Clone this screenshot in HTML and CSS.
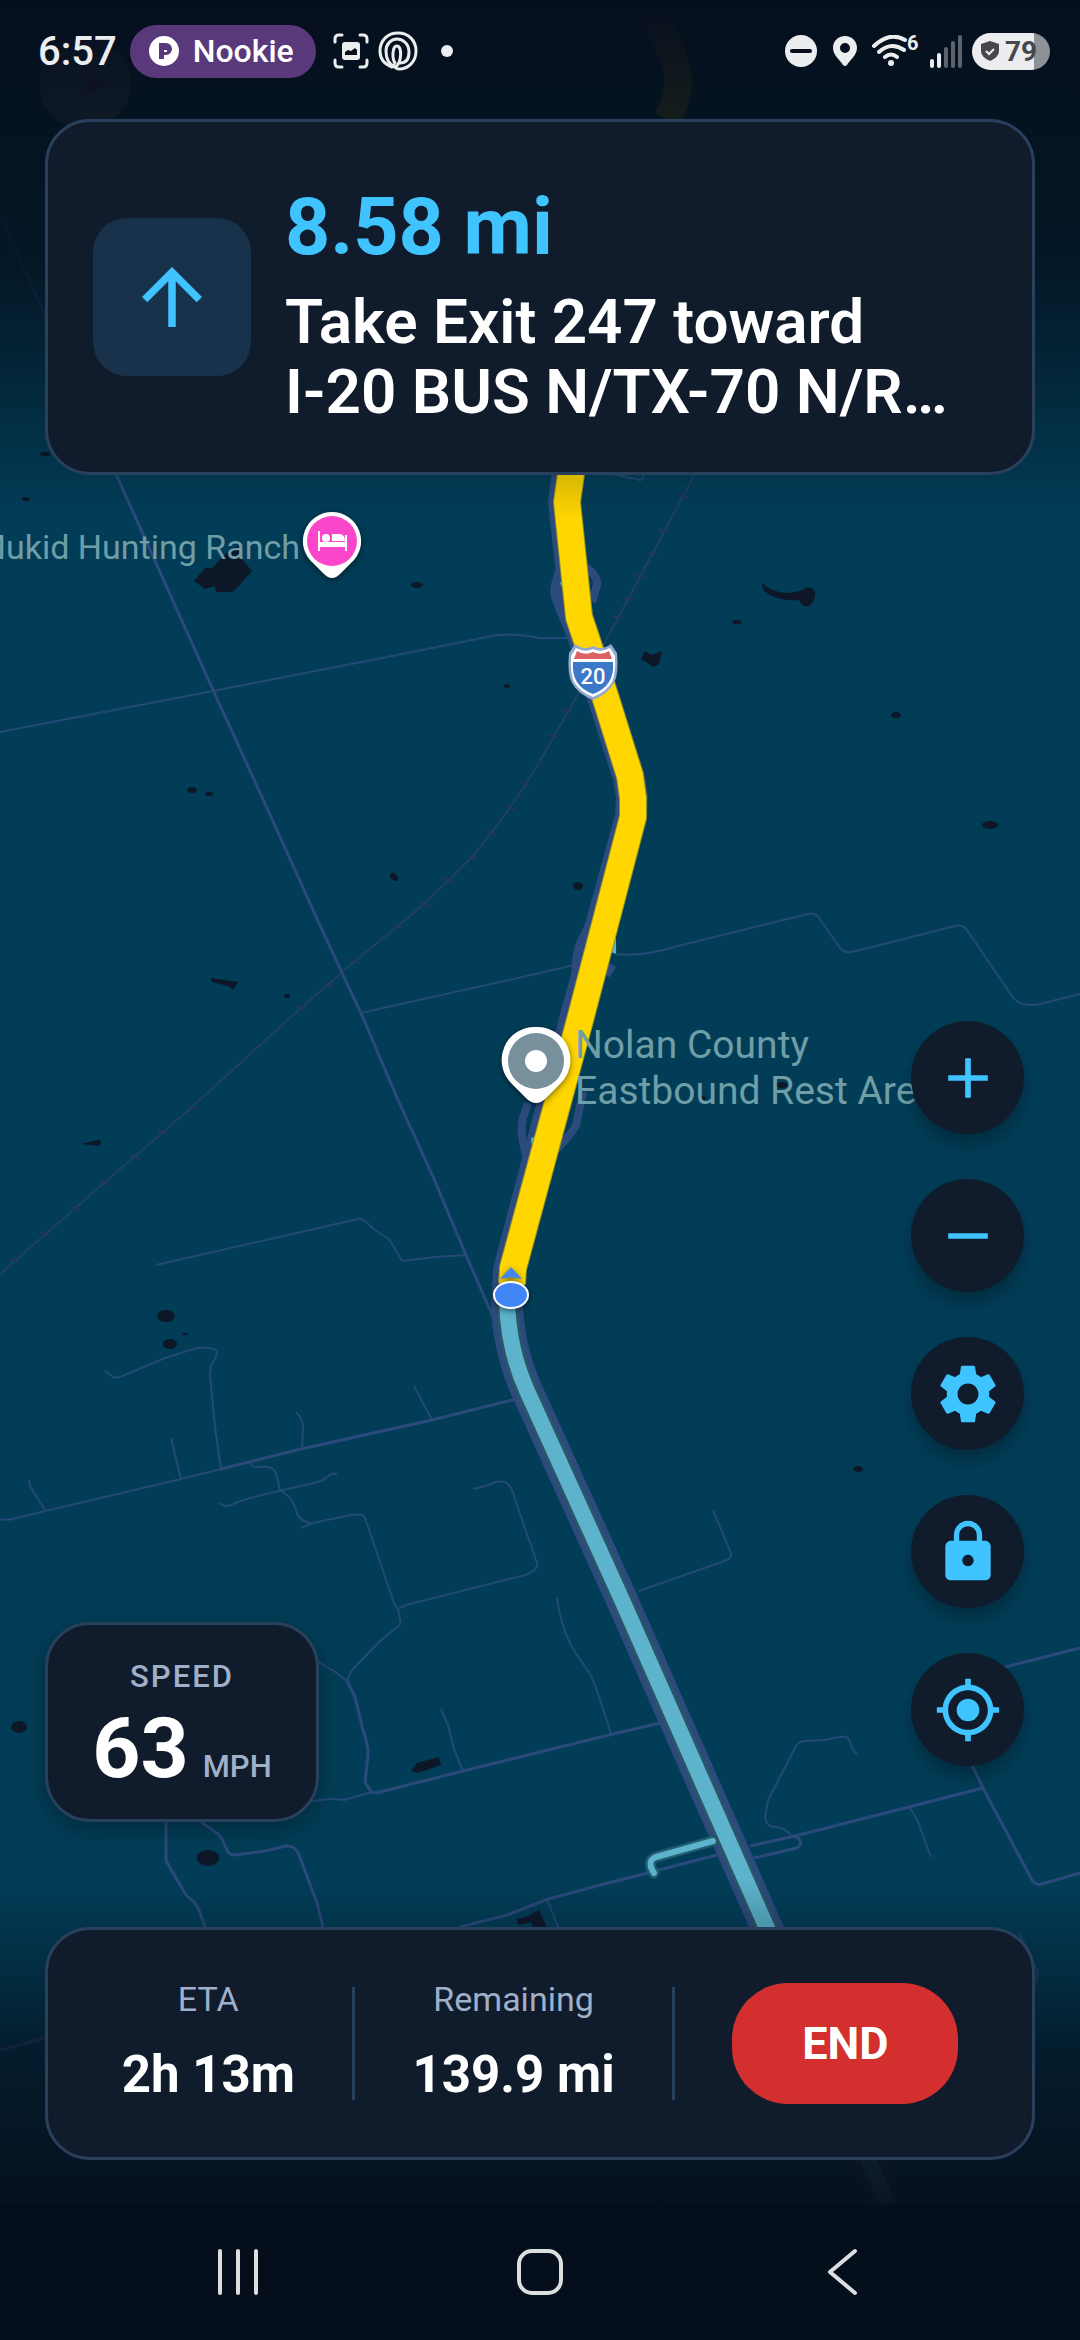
FILE: index.html
```html
<!DOCTYPE html>
<html lang="en">
<head>
    <meta charset="UTF-8">
    <meta name="viewport" content="width=device-width, initial-scale=1.0">
    <title>Navigation</title>
    <link rel="stylesheet" href="styles.css">
</head>
<body>
    <div class="screen">
        <!-- Map -->
        <svg class="map" viewBox="0 0 1080 2340" preserveAspectRatio="xMidYMin slice">
            <!-- Water -->
            <g class="water">
                <path d="M194 581L205 568L212 568L224 555L239 545L241 558L252 571L236 589L232 592L216 592L215 586L205 589Z"/>
                <path d="M211 978L238 982L233 990L228 986L212 982Z"/>
                <path d="M761 582Q772 593 790 593L803 590Q806 586 812 588Q817 592 814 599Q811 608 804 606Q800 603 799 600Q778 602 764 591Z"/>
                <path d="M641 659L645 651L652 655L662 651L659 664L654 667Z"/>
                <path d="M81 1144L93 1141L101 1140L100 1146Z"/>
                <path d="M411 1771L417 1763L439 1757L441 1765L418 1773Z"/>
                <path d="M516 1919L526 1917L539 1910L547 1928L533 1928L531 1922L519 1925Z"/>
                <path d="M650 2192L656 2192L668 2205L656 2205Z"/>
                <ellipse cx="26" cy="499" rx="4" ry="2"/>
                <ellipse cx="45" cy="454" rx="5" ry="2"/>
                <ellipse cx="417" cy="585" rx="6" ry="3"/>
                <ellipse cx="507" cy="686" rx="3" ry="2"/>
                <ellipse cx="192" cy="790" rx="5" ry="3"/>
                <ellipse cx="209" cy="794" rx="4" ry="2"/>
                <ellipse cx="394" cy="877" rx="5" ry="3" transform="rotate(40 394 877)"/>
                <ellipse cx="287" cy="996" rx="3" ry="2"/>
                <ellipse cx="737" cy="622" rx="5" ry="2"/>
                <ellipse cx="896" cy="715" rx="5" ry="3"/>
                <ellipse cx="990" cy="825" rx="8" ry="4"/>
                <ellipse cx="578" cy="886" rx="5" ry="4"/>
                <ellipse cx="782" cy="1085" rx="6" ry="3"/>
                <ellipse cx="702" cy="1098" rx="4" ry="2"/>
                <ellipse cx="166" cy="1316" rx="9" ry="6"/>
                <ellipse cx="185" cy="1334" rx="3" ry="1"/>
                <ellipse cx="170" cy="1344" rx="7" ry="5"/>
                <ellipse cx="858" cy="1469" rx="5" ry="3"/>
                <ellipse cx="19" cy="1727" rx="8" ry="6"/>
                <ellipse cx="208" cy="1858" rx="11" ry="8"/>
            </g>

            <!-- Railway -->
            <path class="rail" d="M695 474L604 644L578 694L540 761C520 796 500 823 472 857C440 890 420 908 398 926L355 961L301 1008L192 1107L104 1183L0 1274"/>
            <path class="ties" d="M678 495l10 2M659 530l10 2M648 553l10 2M635 575l10 2M623 598l10 2M612 616l10 2M562 710l10 2M548 735l10 2M520 782l10 4M505 806l10 4M486 831l10 4M467 855l10 4M443 878l10 4M419 902l10 4M393 924l10 4M350 959l10 4M323 983l10 4M296 1006l10 4M187 1105l10 4M158 1130l10 4M129 1155l10 4M99 1181l10 4M70 1206l10 4M40 1232l10 4M10 1259l10 4"/>

            <!-- Local roads -->
            <g class="road road-thin">
                <path d="M0 732L213 691L372 660L492 636Q510 632 540 638L569 638"/>
                <path d="M361 1013L540 973L574 965M616 954Q643 957 678 946L808 914Q815 912 819 918L833 938L841 949Q845 953 852 952L955 926Q963 924 967 930L1012 996Q1020 1008 1040 1004L1080 994"/>
                <path d="M612 474L640 480Q644 480 643 474"/>
                <path d="M156 1265L358 1219Q363 1218 366 1222L375 1230L389 1239L401 1259Q403 1262 410 1260L436 1257L466 1255"/>
                <path d="M105 1371L113 1377Q116 1379 127 1374L165 1358L190 1350Q205 1345 216 1350Q219 1354 211 1365L210 1375L215 1427L221 1469"/>
                <path d="M0 1519Q8 1521 16 1518L181 1479L221 1469"/>
                <path d="M414 1386L432 1420M296 1412Q304 1420 303 1430L302 1449M171 1438L181 1479M29 1480L30 1486L45 1510"/>
                <path d="M250 1463Q252 1468 260 1467Q273 1466 275 1472Q279 1481 279 1487Q280 1491 287 1495Q294 1502 296 1510Q298 1522 313 1523"/>
                <path d="M220 1503Q226 1509 235 1503Q250 1497 288 1489L318 1482Q324 1480 327 1477Q332 1472 337 1474"/>
                <path d="M301 1528L313 1523L351 1515Q363 1513 365 1518L394 1603L398 1609L399 1616Q403 1624 396 1628L380 1641L351 1671L347 1681"/>
                <path d="M473 1489L489 1485Q498 1480 505 1482Q510 1484 513 1493L537 1563Q539 1570 525 1575L406 1605L398 1609"/>
                <path d="M318 1662L334 1671L347 1681M312 1801L331 1799L344 1800L372 1792M441 1709L448 1725L454 1749L463 1771"/>
                <path d="M557 1598Q562 1632 575 1652L590 1674Q595 1682 611 1734"/>
                <path d="M639 1591L727 1560Q733 1557 730 1551L713 1510"/>
                <path d="M857 1755Q852 1750 850 1742Q848 1735 840 1737L824 1740L805 1741Q797 1741 794 1750L768 1800L765 1818Q767 1827 775 1827Q784 1827 792 1836"/>
                <path d="M909 1807Q916 1817 918 1822L931 1857M547 1899L558 1927M1019 1933L1038 1972L1036 1982"/>
            </g>
            <g class="road">
                <path d="M0 215L116 474L213 690L262 797L318 921L364 1020L398 1100L434 1179L466 1255L494 1319"/>
                <path d="M221 1469L301 1449L432 1420L516 1399"/>
                <path d="M347 1681L355 1697L363 1730Q369 1747 368 1755L365 1783L371 1791Q373 1794 380 1792L463 1771L609 1735L660 1723"/>
                <path d="M166 1822V1861L186 1895L195 1903Q199 1908 205 1927"/>
                <path d="M201 1822L218 1834Q222 1838 225 1846Q229 1856 234 1855L265 1851L286 1846Q295 1845 299 1855L317 1903L323 1927"/>
                <path d="M750 1846L795 1836L909 1807L971 1791L983 1788M960 1740L983 1788L1032 1880Q1036 1886 1042 1884L1080 1873M970 1678L1005 1667L1080 1648"/>
                <path d="M795 1836Q805 1842 797 1848L754 1858M717 1855L593 1887L548 1899L507 1915L460 1927M0 2050L45 2038"/>
            </g>

            <!-- Highway casing and ramps -->
            <g class="highway">
                <path d="M572 440L568 474L564 502L577 617L586 644L603 696L629 778L632 798L631 817L575 1020L509 1270L507 1303Q508 1350 528 1393L622 1600L766 1926L888 2205"/>
            </g>
            <g class="ramp">
                <path d="M562 560L557 578Q552 592 556 600L570 635M584 566Q598 575 597 585L592 602M594 915L580 943Q574 960 576 985L568 1020M528 1103L523 1118Q519 1130 526 1155M583 1092L576 1125Q573 1132 556 1150M613 965L606 975"/>
            </g>
            <path class="teal-fill" d="M560 583L565 577L568 600ZM611 952L616 935V954ZM531 1138L537 1136L533 1156Z"/>
            <path class="ramp-casing" d="M713 1841L656 1857Q646 1861 654 1873"/>
            <path class="ramp-teal" d="M713 1841L656 1857Q646 1861 654 1873"/>
            <path class="driven-casing" d="M507 1300Q508 1350 528 1393L622 1600L766 1926L888 2205"/>
            <path class="driven" d="M507 1300Q508 1350 528 1393L622 1600L766 1926L888 2205"/>

            <!-- Route ahead -->
            <path class="route-edge" d="M655 15L670 50Q688 82 667 119M576 440L571 474L567 502L579 617L588 644L605 696L630 776L633 798L633 817L580 1020L513 1268L512 1284"/>
            <path class="route" d="M655 15L670 50Q688 82 667 119M576 440L571 474L567 502L579 617L588 644L605 696L630 776L633 798L633 817L580 1020L513 1268L512 1284"/>

            <!-- Compass -->
            <circle cx="85" cy="83" r="46" fill="#9a9a9c"/>
            <path d="M113 83L84 76L89 83L85 92Z" fill="#b02a35"/>

            <!-- Interstate shield -->
            <g>
                <path d="M575 644Q584 651 593 646Q602 651 611 644L617 653Q619 674 614 683Q608 694 593 700Q578 694 572 683Q567 674 569 653Z" fill="#92a9cf"/>
                <path d="M576 648Q585 653 593 649Q601 653 610 648L615 656Q616 673 612 682Q606 692 593 697Q580 692 574 682Q570 673 571 656Z" fill="#fff"/>
                <path d="M577 651Q585 656 593 652Q601 656 609 651L612 659H574Z" fill="#dd6262"/>
                <path d="M573 662H613Q614 674 609 682Q604 690 593 694Q582 690 577 682Q572 674 573 662Z" fill="#3b78c8"/>
                <text class="shield-text" x="593" y="684">20</text>
            </g>

            <!-- Lodging -->
            <text class="poi poi-end" x="300" y="559">Mukid Hunting Ranch</text>
            <g class="pin">
                <path d="M332 512A29 29 0 0 0 313 563L324 574Q332 582 340 574L351 563A29 29 0 0 0 332 512Z" fill="#fff"/>
                <circle cx="332" cy="541" r="25" fill="#f946cb"/>
                <path d="M318 531h2v11h25v-7h2v16h-2v-4h-25v4h-2zM332 534h8q5 1 5 7h-13z" fill="#fff"/>
                <circle cx="326" cy="538" r="4" fill="#fff"/>
            </g>

            <!-- Rest area -->
            <text class="poi poi-large" x="575" y="1058">Nolan County</text>
            <text class="poi poi-large" x="575" y="1104">Eastbound Rest Area</text>
            <g class="pin">
                <path d="M536 1027A33 33 0 0 0 512 1084L527 1099Q536 1107 545 1099L560 1084A33 33 0 0 0 536 1027Z" fill="#fff"/>
                <circle cx="536" cy="1061" r="28" fill="#78909c"/>
                <circle cx="536" cy="1061" r="11" fill="#fff"/>
            </g>

            <!-- Own position -->
            <g class="pin">
                <path d="M511 1267L522 1279Q511 1276 500 1279Z" fill="#4285f4"/>
                <ellipse cx="511" cy="1295" rx="18" ry="14" fill="#fff"/>
                <ellipse cx="511" cy="1295" rx="16" ry="12" fill="#4285f4"/>
            </g>
        </svg>
        <div class="shade shade-top"></div>
        <div class="shade shade-bottom"></div>

        <header class="status-bar">
            <div class="status-left">
                <span class="clock">6:57</span>
                <span class="media-pill">
                    <svg width="30" height="30" viewBox="0 0 30 30">
                        <circle cx="15" cy="15" r="15" fill="#fff"/>
                        <path d="M10 7h7a6 6 0 0 1 0 12h-2v4h-5z" fill="#59387c"/>
                        <path d="M15 15h3" stroke="#fff" stroke-width="2"/>
                    </svg>
                    Nookie
                </span>
                <svg width="36" height="36" viewBox="0 0 36 36" fill="none" stroke="#ecedef" stroke-width="3" stroke-linecap="round">
                    <path d="M2 9V6q0-4 4-4h3M27 2h3q4 0 4 4v3M34 27v3q0 4-4 4h-3M9 34H6q-4 0-4-4v-3"/>
                    <rect x="9" y="9" width="18" height="18" rx="3" fill="#ecedef" stroke="none"/>
                    <path d="M12 22v-3l3-2 3 1 4-3 2 2v5z" fill="#06101c" stroke="none"/>
                </svg>
                <svg width="40" height="40" viewBox="0 0 40 40" fill="none" stroke="#ecedef" stroke-width="3" stroke-linecap="round">
                    <path d="M14 36C6 33 2 27 2 20C2 9 10 2 20 2S38 9 38 20S30 38 21 38Q17 38 16 34"/>
                    <path d="M17 36C10 33 8 27 8 20C8 13 13 8 19 8S31 13 31 21S27 32 22 32"/>
                    <path d="M17 32C14 28 14 15 19 15S24 30 18 36"/>
                </svg>
                <span class="more-dot"></span>
            </div>
            <div class="status-right">
                <svg width="32" height="32" viewBox="0 0 32 32">
                    <circle cx="16" cy="16" r="16" fill="#ecedef"/>
                    <path d="M7 16h18" stroke="#06101c" stroke-width="4" stroke-linecap="round"/>
                </svg>
                <svg class="location" width="24" height="30" viewBox="0 0 24 30">
                    <path d="M12 0C5 0 0 5 0 12c0 7 7 12 10 17q2 2 4 0c3-5 10-10 10-17C24 5 19 0 12 0zm0 7a5 5 0 1 1 0 10 5 5 0 0 1 0-10z" fill="#ecedef"/>
                </svg>
                <svg width="36" height="32" viewBox="0 0 36 32" fill="none" stroke="#ecedef" stroke-width="4" stroke-linecap="round">
                    <path d="M3 11Q19-4 34 5M8 17Q20 6 33 15M14 22Q20 17 26 22"/>
                    <circle cx="20" cy="28" r="3" fill="#ecedef" stroke="none"/>
                </svg>
                <span class="wifi-gen">6</span>
                <svg width="34" height="34" viewBox="0 0 34 34" stroke-width="4" stroke-linecap="round">
                    <path d="M3 27v5M10 21v11" stroke="#ecedef"/>
                    <path d="M17 15v17M24 9v23M31 3v29" stroke="#5d636d"/>
                </svg>
                <span class="battery">
                    <svg width="18" height="20" viewBox="0 0 18 20">
                        <path d="M9 0L18 3V10Q18 16 9 20Q0 16 0 10V3Z" fill="#47484d"/>
                        <path d="M5 10l3 3 5-5" fill="none" stroke="#ecedef" stroke-width="2"/>
                    </svg>
                    79
                </span>
            </div>
        </header>

        <section class="card direction">
            <div class="maneuver">
                <svg width="90" height="90" viewBox="0 0 24 24" fill="#40c4ff">
                    <path d="M4 12l1.41 1.41L11 7.83V20h2V7.83l5.58 5.59L20 12l-8-8-8 8z"/>
                </svg>
            </div>
            <div class="direction-text">
                <div class="distance">8.58 mi</div>
                <h1>Take Exit 247 toward<br>I-20 BUS N/TX-70 N/R…</h1>
            </div>
        </section>

        <main class="middle">
            <section class="card speed">
                <div class="speed-label">SPEED</div>
                <div class="speed-row">
                    <span class="speed-value">63</span>
                    <span class="speed-unit">MPH</span>
                </div>
            </section>
            <div class="controls">
                <button type="button" class="fab" aria-label="Zoom in">
                    <svg width="68" height="68" viewBox="0 0 24 24"><path d="M19 13h-6v6h-2v-6H5v-2h6V5h2v6h6v2z"/></svg>
                </button>
                <button type="button" class="fab" aria-label="Zoom out">
                    <svg width="68" height="68" viewBox="0 0 24 24"><path d="M19 13H5v-2h14v2z"/></svg>
                </button>
                <button type="button" class="fab" aria-label="Settings">
                    <svg width="68" height="68" viewBox="0 0 24 24"><path d="M19.43 12.98c.04-.32.07-.64.07-.98s-.03-.66-.07-.98l2.11-1.65c.19-.15.24-.42.12-.64l-2-3.46c-.12-.22-.39-.3-.61-.22l-2.49 1c-.52-.4-1.08-.73-1.69-.98l-.38-2.65C14.46 2.18 14.25 2 14 2h-4c-.25 0-.46.18-.49.42l-.38 2.65c-.61.25-1.17.59-1.69.98l-2.49-1c-.23-.09-.49 0-.61.22l-2 3.46c-.13.22-.07.49.12.64l2.11 1.65c-.04.32-.07.65-.07.98s.03.66.07.98l-2.11 1.65c-.19.15-.24.42-.12.64l2 3.46c.12.22.39.3.61.22l2.49-1c.52.4 1.08.73 1.69.98l.38 2.65c.03.24.24.42.49.42h4c.25 0 .46-.18.49-.42l.38-2.65c.61-.25 1.17-.59 1.69-.98l2.49 1c.23.09.49 0 .61-.22l2-3.46c.12-.22.07-.49-.12-.64l-2.11-1.65zM12 15.7c-2.04 0-3.7-1.66-3.7-3.7s1.66-3.7 3.7-3.7 3.7 1.66 3.7 3.7-1.66 3.7-3.7 3.7z"/></svg>
                </button>
                <button type="button" class="fab" aria-label="Lock">
                    <svg width="68" height="68" viewBox="0 0 24 24"><path d="M18 8h-1V6c0-2.76-2.24-5-5-5S7 3.24 7 6v2H6c-1.1 0-2 .9-2 2v10c0 1.1.9 2 2 2h12c1.1 0 2-.9 2-2V10c0-1.1-.9-2-2-2zm-6 9c-1.1 0-2-.9-2-2s.9-2 2-2 2 .9 2 2-.9 2-2 2zm3.1-9H8.9V6c0-1.71 1.39-3.1 3.1-3.1 1.71 0 3.1 1.39 3.1 3.1v2z"/></svg>
                </button>
                <button type="button" class="fab" aria-label="My location">
                    <svg width="68" height="68" viewBox="0 0 24 24"><path d="M12 8c-2.21 0-4 1.79-4 4s1.79 4 4 4 4-1.79 4-4-1.79-4-4-4zm8.94 3c-.46-4.17-3.77-7.48-7.94-7.94V1h-2v2.06C6.83 3.52 3.52 6.83 3.06 11H1v2h2.06c.46 4.17 3.77 7.48 7.94 7.94V23h2v-2.06c4.17-.46 7.48-3.77 7.94-7.94H23v-2h-2.06zM12 19c-3.87 0-7-3.13-7-7s3.13-7 7-7 7 3.13 7 7-3.13 7-7 7z"/></svg>
                </button>
            </div>
        </main>

        <section class="card trip">
            <div class="stat">
                <div class="stat-label">ETA</div>
                <div class="stat-value">2h 13m</div>
            </div>
            <div class="divider"></div>
            <div class="stat">
                <div class="stat-label">Remaining</div>
                <div class="stat-value">139.9 mi</div>
            </div>
            <div class="divider"></div>
            <button type="button" class="end-btn">END</button>
        </section>

        <nav class="nav-bar">
            <button type="button" aria-label="Recent apps">
                <svg width="48" height="48" viewBox="0 0 48 48"><path d="M6 3v42M24 3v42M42 3v42"/></svg>
            </button>
            <button type="button" aria-label="Home">
                <svg width="48" height="48" viewBox="0 0 48 48"><rect x="3" y="3" width="42" height="42" rx="13"/></svg>
            </button>
            <button type="button" aria-label="Back">
                <svg width="48" height="48" viewBox="0 0 48 48"><path d="M37 3L12 24L37 45"/></svg>
            </button>
        </nav>
    </div>
</body>
</html>
```

FILE: styles.css
```css
* {
    box-sizing: border-box;
}
body {
    margin: 0;
    font-family: Roboto, "Liberation Sans", sans-serif;
    background-color: #023d57;
    color: #fff;
}
button {
    border: none;
    padding: 0;
    font-family: inherit;
    cursor: pointer;
}
svg {
    display: block;
    flex-shrink: 0;
}
.screen {
    position: relative;
    display: flex;
    flex-direction: column;
    min-height: 100vh;
    overflow: hidden;
}

/* Map */
.map {
    position: absolute;
    inset: 0;
    width: 100%;
    height: 100%;
    background-color: #023d57;
}
.water {
    fill: #0d1728;
}
.rail {
    fill: none;
    stroke: #1f3f66;
    stroke-width: 2;
}
.ties {
    stroke: #24355e;
    stroke-width: 2;
}
.road {
    fill: none;
    stroke: #2a4a7c;
    stroke-width: 3;
    stroke-linejoin: round;
}
.road-thin {
    stroke: #234a74;
    stroke-width: 2;
}
.highway {
    fill: none;
    stroke: #2c4a7d;
    stroke-width: 32;
    stroke-linejoin: round;
}
.ramp {
    fill: none;
    stroke: #2c4a7d;
    stroke-width: 8;
}
.teal-fill {
    fill: #5cb3cb;
}
.ramp-casing, .ramp-teal, .driven-casing, .driven, .route, .route-edge {
    fill: none;
    stroke-linejoin: round;
}
.ramp-casing {
    stroke: #1f5c6d;
    stroke-width: 11;
    stroke-linecap: round;
}
.ramp-teal {
    stroke: #5cb3cb;
    stroke-width: 6;
    stroke-linecap: round;
}
.driven-casing {
    stroke: #2b5667;
    stroke-width: 22;
}
.driven {
    stroke: #5cb3cb;
    stroke-width: 16;
}
.route-edge {
    stroke: #8f8f2a;
    stroke-width: 28;
}
.route {
    stroke: #ffd600;
    stroke-width: 26;
}
.poi {
    fill: #6f9ea7;
    font-size: 34px;
}
.poi-end {
    text-anchor: end;
}
.poi-large {
    font-size: 39px;
}
.shield-text {
    fill: #fff;
    font-size: 22px;
    font-weight: 500;
    text-anchor: middle;
}
.pin {
    filter: drop-shadow(0 2px 3px rgba(0, 0, 0, 0.5));
}
.shade {
    position: absolute;
    left: 0;
    right: 0;
}
.shade-top {
    top: 0;
    height: 520px;
    background: linear-gradient(#060f1e 0%, rgba(5, 16, 29, 0.93) 25%, rgba(4, 17, 30, 0.87) 50%, rgba(3, 16, 26, 0.45) 75%, rgba(3, 14, 24, 0) 100%);
}
.shade-bottom {
    bottom: 0;
    height: 460px;
    background: linear-gradient(rgba(3, 14, 24, 0) 0%, rgba(4, 14, 25, 0.7) 38%, rgba(6, 16, 30, 0.91) 58%, #060f1e 78%);
}

/* Status bar */
.status-bar {
    position: relative;
    display: flex;
    justify-content: space-between;
    align-items: center;
    height: 102px;
    padding: 0 30px 0 38px;
}
.status-left, .status-right {
    display: flex;
    align-items: center;
}
.clock {
    color: #ecedef;
    font-size: 40px;
    font-weight: 500;
    margin-right: 13px;
}
.media-pill {
    display: flex;
    align-items: center;
    gap: 14px;
    height: 53px;
    padding: 0 22px 0 19px;
    margin-right: 17px;
    border-radius: 27px;
    background-color: #59387c;
    font-size: 32px;
    font-weight: 500;
}
.status-left > svg {
    margin-right: 9px;
}
.more-dot {
    width: 12px;
    height: 12px;
    margin-left: 14px;
    border-radius: 50%;
    background-color: #ecedef;
}
.location {
    margin: 0 14px 0 16px;
}
.wifi-gen {
    align-self: flex-start;
    width: 14px;
    margin-right: 8px;
    color: #ecedef;
    font-size: 20px;
    font-weight: 700;
    line-height: 20px;
}
.battery {
    display: flex;
    align-items: center;
    gap: 6px;
    width: 78px;
    height: 37px;
    margin-left: 9px;
    padding-left: 9px;
    border-radius: 19px;
    background: linear-gradient(90deg, #ecedef 79%, #8e9297 79%);
    color: #47484d;
    font-size: 28px;
    font-weight: 700;
}

/* Cards */
.card {
    position: relative;
    border: 3px solid #28405c;
    border-radius: 45px;
    background-color: #101b2c;
}
.direction {
    display: flex;
    align-items: center;
    gap: 34px;
    margin: 17px 45px 0;
    padding: 45px;
}
.maneuver {
    display: flex;
    align-items: center;
    justify-content: center;
    flex-shrink: 0;
    width: 158px;
    height: 158px;
    border-radius: 34px;
    background-color: #17324a;
}
.direction-text {
    min-width: 0;
}
.distance {
    color: #40c4ff;
    font-size: 79px;
    font-weight: 700;
    line-height: 120px;
}
h1 {
    margin: 0;
    font-size: 62px;
    font-weight: 600;
    line-height: 70px;
    white-space: nowrap;
}

.middle {
    position: relative;
    display: flex;
    flex: 1;
    justify-content: space-between;
    align-items: flex-end;
    padding: 0 56px 105px 45px;
}
.speed {
    width: 274px;
    height: 200px;
    padding-top: 29px;
    text-align: center;
    box-shadow: 0 8px 24px rgba(0, 0, 0, 0.3);
}
.speed-label {
    color: #9fb0c8;
    font-size: 31px;
    font-weight: 500;
    line-height: 46px;
    letter-spacing: 2px;
}
.speed-row {
    display: flex;
    justify-content: center;
    align-items: baseline;
    gap: 14px;
    line-height: 98px;
}
.speed-value {
    font-size: 84px;
    font-weight: 700;
}
.speed-unit {
    color: #9fb0c8;
    font-size: 31px;
    font-weight: 500;
}
.controls {
    display: flex;
    flex-direction: column;
    gap: 45px;
    margin-bottom: 56px;
}
.fab {
    display: flex;
    align-items: center;
    justify-content: center;
    width: 113px;
    height: 113px;
    border-radius: 50%;
    background-color: #101b2c;
    box-shadow: 0 10px 18px rgba(0, 0, 0, 0.28);
}
.fab svg {
    fill: #40c4ff;
}

/* Trip summary */
.trip {
    display: flex;
    justify-content: space-around;
    align-items: center;
    height: 233px;
    margin: 0 45px 45px;
    padding: 0 45px;
}
.stat {
    text-align: center;
}
.stat-label {
    color: #9fb0c8;
    font-size: 34px;
    line-height: 40px;
    margin-bottom: 22px;
}
.stat-value {
    font-size: 51px;
    font-weight: 700;
    line-height: 68px;
}
.divider {
    width: 3px;
    height: 113px;
    background-color: #28405c;
}
.end-btn {
    width: 226px;
    height: 121px;
    border-radius: 56px;
    background-color: #d32f2f;
    color: #fff;
    font-size: 45px;
    font-weight: 700;
}

/* System navigation */
.nav-bar {
    position: relative;
    display: flex;
    justify-content: center;
    gap: 254px;
    height: 135px;
    padding-top: 43px;
    background-color: #050f1c;
}
.nav-bar button {
    height: 48px;
    background: none;
}
.nav-bar svg {
    fill: none;
    stroke: #dcdee0;
    stroke-width: 4;
    stroke-linecap: round;
    stroke-linejoin: round;
}
```
